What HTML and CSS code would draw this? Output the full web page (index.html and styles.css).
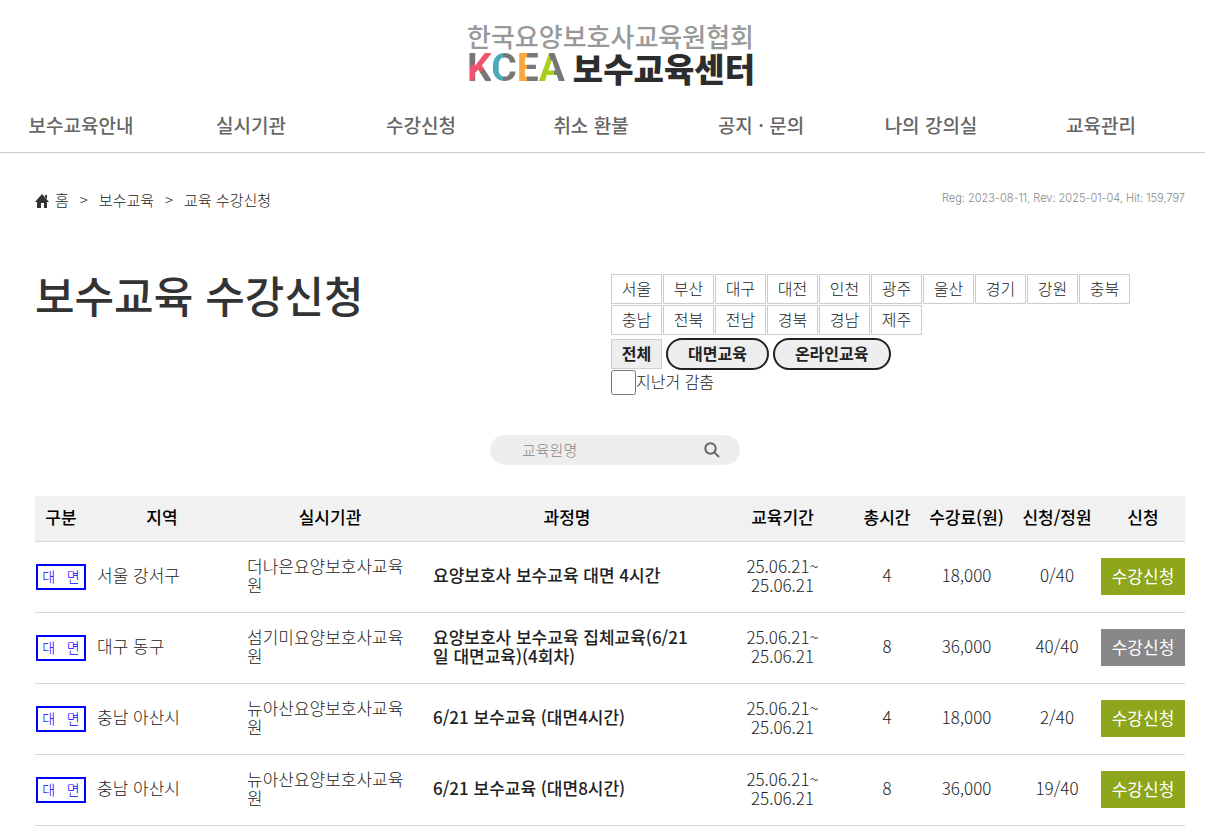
FILE: index.html
```
<!DOCTYPE html>
<html lang="ko">
<head>
  <meta charset="UTF-8">
  <meta name="viewport" content="width=device-width, initial-scale=1">
  <title>보수교육 수강신청</title>
  <link rel="stylesheet" href="styles.css">
</head>
<body>
  <header class="header">
    <div class="logo-wrap">
      <a href="#" class="logo">
        <span class="logo-top">한국요양보호사교육원협회</span>
        <span class="logo-bottom">
          <span class="kcea"><span class="k">K</span><span class="c">C</span><span class="e">E</span><span class="a">A</span></span>
          <strong class="logo-name">보수교육센터</strong>
        </span>
      </a>
    </div>
    <nav class="nav">
      <a href="#">보수교육안내</a>
      <a href="#">실시기관</a>
      <a href="#">수강신청</a>
      <a href="#">취소 환불</a>
      <a href="#">공지 · 문의</a>
      <a href="#">나의 강의실</a>
      <a href="#">교육관리</a>
    </nav>
  </header>

  <main class="content">
    <div class="location">
      <div class="breadcrumb">
        <a href="#"><svg class="home" viewBox="0 0 14 14"><path d="M7 0 14 8h-2v6H9V9H6v5H2V8H0z M10 1h2v4l-2-2z"/></svg>홈</a>
        <span>&gt;</span>
        <a href="#">보수교육</a>
        <span>&gt;</span>
        <a href="#">교육 수강신청</a>
      </div>
      <div class="meta">Reg: 2023-08-11, Rev: 2025-01-04, Hit: 159,797</div>
    </div>

    <div class="top">
      <h1>보수교육 수강신청</h1>
      <div class="filter">
        <div class="regions">
          <button type="button">서울</button>
          <button type="button">부산</button>
          <button type="button">대구</button>
          <button type="button">대전</button>
          <button type="button">인천</button>
          <button type="button">광주</button>
          <button type="button">울산</button>
          <button type="button">경기</button>
          <button type="button">강원</button>
          <button type="button">충북</button>
          <button type="button">충남</button>
          <button type="button">전북</button>
          <button type="button">전남</button>
          <button type="button">경북</button>
          <button type="button">경남</button>
          <button type="button">제주</button>
        </div>
        <div class="types">
          <button type="button" class="all">전체</button>
          <button type="button" class="round">대면교육</button>
          <button type="button" class="round">온라인교육</button>
        </div>
        <div class="hide-past">
          <input type="checkbox" id="past"><label for="past">지난거 감춤</label>
        </div>
      </div>
    </div>

    <div class="search-wrap">
      <form class="search">
        <input type="text" placeholder="교육원명" aria-label="교육원명">
        <button type="button" aria-label="검색">
          <svg viewBox="0 0 16 16"><circle cx="6.5" cy="6.5" r="5.2"/><path d="M10.4 10.4 15 15"/></svg>
        </button>
      </form>
    </div>

    <table class="list">
      <colgroup>
        <col class="w-type"><col class="w-area"><col class="w-org"><col><col class="w-date">
        <col class="w-hour"><col class="w-fee"><col class="w-seat"><col class="w-apply">
      </colgroup>
      <thead>
        <tr>
          <th>구분</th><th>지역</th><th>실시기관</th><th>과정명</th><th>교육기간</th>
          <th>총시간</th><th>수강료(원)</th><th>신청/정원</th><th>신청</th>
        </tr>
      </thead>
      <tbody>
        <tr>
          <td class="type"><span class="badge">대&nbsp;&nbsp; 면</span></td>
          <td class="left">서울 강서구</td>
          <td class="left">더나은요양보호사교육원</td>
          <td class="left name">요양보호사 보수교육 대면 4시간</td>
          <td>25.06.21~<br>25.06.21</td>
          <td>4</td><td>18,000</td><td>0/40</td>
          <td class="apply"><button type="button">수강신청</button></td>
        </tr>
        <tr>
          <td class="type"><span class="badge">대&nbsp;&nbsp; 면</span></td>
          <td class="left">대구 동구</td>
          <td class="left">섬기미요양보호사교육원</td>
          <td class="left name">요양보호사 보수교육 집체교육(6/21일 대면교육)(4회차)</td>
          <td>25.06.21~<br>25.06.21</td>
          <td>8</td><td>36,000</td><td>40/40</td>
          <td class="apply"><button type="button" class="full">수강신청</button></td>
        </tr>
        <tr>
          <td class="type"><span class="badge">대&nbsp;&nbsp; 면</span></td>
          <td class="left">충남 아산시</td>
          <td class="left">뉴아산요양보호사교육원</td>
          <td class="left name">6/21 보수교육 (대면4시간)</td>
          <td>25.06.21~<br>25.06.21</td>
          <td>4</td><td>18,000</td><td>2/40</td>
          <td class="apply"><button type="button">수강신청</button></td>
        </tr>
        <tr>
          <td class="type"><span class="badge">대&nbsp;&nbsp; 면</span></td>
          <td class="left">충남 아산시</td>
          <td class="left">뉴아산요양보호사교육원</td>
          <td class="left name">6/21 보수교육 (대면8시간)</td>
          <td>25.06.21~<br>25.06.21</td>
          <td>8</td><td>36,000</td><td>19/40</td>
          <td class="apply"><button type="button">수강신청</button></td>
        </tr>
      </tbody>
    </table>
  </main>
</body>
</html>
```
FILE: styles.css
```
* {
  box-sizing: border-box;
}

body {
  margin: 0;
  font-family: "Noto Sans CJK KR", sans-serif;
  font-weight: 300;
  font-size: 17px;
  line-height: 19px;
  color: #222;
  background-color: #fff;
}

a {
  color: inherit;
  text-decoration: none;
}

button,
input {
  font-family: inherit;
  color: inherit;
}

button {
  cursor: pointer;
}

/* header */
.header {
  padding-top: 22px;
  border-bottom: 1px solid #ccc;
}

.logo-wrap {
  padding-left: 17px;
}

.logo {
  display: block;
  width: 288px;
  margin: 0 auto;
  white-space: nowrap;
}

.logo-top {
  display: block;
  font-size: 26px;
  font-weight: 500;
  line-height: 28px;
  color: #999;
}

.logo-bottom {
  display: flex;
  align-items: center;
  justify-content: space-between;
  height: 36px;
}

.kcea {
  font-family: Roboto, sans-serif;
  font-size: 39px;
  font-weight: 700;
  line-height: 38px;
}

.kcea span {
  color: transparent;
  background-clip: text;
  -webkit-background-clip: text;
}

.kcea .k {
  background-image: linear-gradient(135deg, #777 36%, #f0536f 36%, #f0536f 58%, #777 58%);
}

.kcea .c {
  background-image: linear-gradient(90deg, #4aa9bb 45%, #777 45%);
}

.kcea .e {
  background-image: linear-gradient(90deg, #f9a73e 45%, #777 45%);
}

.kcea .a {
  background-image: linear-gradient(75deg, #a9cf1c 52%, #777 52%);
}

.logo-name {
  font-size: 33px;
  font-weight: 900;
  line-height: 32px;
  color: #2d2d2d;
}

.nav {
  display: grid;
  grid-template-columns: repeat(7, 1fr);
  margin: 12px 19px 0 -4px;
}

.nav a {
  padding: 14px 0;
  font-size: 19px;
  font-weight: 500;
  line-height: 26px;
  text-align: center;
  color: #666;
}

/* content */
.content {
  padding: 37px 20px 0 35px;
}

.location {
  display: flex;
  justify-content: space-between;
}

.breadcrumb {
  display: flex;
  gap: 11px;
  font-size: 15px;
  line-height: 20px;
}

.home {
  width: 14px;
  height: 14px;
  margin-right: 6px;
  vertical-align: -2px;
  fill: #333;
}

.meta {
  font-family: Inter, sans-serif;
  font-size: 11px;
  line-height: 16px;
  color: #888;
}

.top {
  display: grid;
  grid-template-columns: 1fr 1fr;
  column-gap: 2px;
  margin-top: 64px;
}

h1 {
  margin: 0;
  font-size: 43px;
  font-weight: 500;
  line-height: 40px;
  color: #333;
}

.filter {
  padding-right: 40px;
}

.regions,
.types {
  display: flex;
  flex-wrap: wrap;
  gap: 1px;
}

.regions button,
.all {
  width: 51px;
  height: 30px;
  padding: 0 0 2px;
  border: 1px solid #ccc;
  background-color: #fff;
  font-size: 16px;
  font-weight: 300;
}

.types {
  align-items: center;
  gap: 4px;
  margin-top: 3px;
}

.types button {
  background-color: #eee;
  font-size: 16px;
  font-weight: 700;
}

.types .round {
  height: 32px;
  padding: 0 20px 2px;
  border: 2px solid #222;
  border-radius: 16px;
}

.hide-past {
  display: flex;
  font-size: 16px;
  line-height: 22px;
}

.hide-past input {
  width: 25px;
  height: 25px;
  margin: 0;
}

/* search */
.search-wrap {
  padding: 40px 0 31px 10px;
}

.search {
  display: flex;
  align-items: center;
  width: 250px;
  height: 30px;
  margin: 0 auto;
  padding: 0 20px 0 32px;
  border-radius: 15px;
  background-color: #eee;
}

.search input {
  flex: 1;
  min-width: 0;
  padding: 0 0 2px;
  border: 0;
  outline: 0;
  background: none;
  font-size: 15px;
  font-weight: 300;
}

.search input::placeholder {
  color: #888;
}

.search button {
  display: flex;
  padding: 0;
  border: 0;
  background: none;
}

.search svg {
  width: 16px;
  height: 16px;
  fill: none;
  stroke: #666;
  stroke-width: 2;
}

/* table */
.list {
  width: 100%;
  table-layout: fixed;
  border-collapse: collapse;
}

.w-type { width: 52px; }
.w-area { width: 150px; }
.w-org { width: 186px; }
.w-date { width: 143px; }
.w-hour { width: 66px; }
.w-fee { width: 93px; }
.w-seat { width: 88px; }
.w-apply { width: 84px; }

.list th {
  height: 45px;
  padding: 0 0 3px;
  background-color: #f1f1f1;
  border-bottom: 1px solid #d5d5d5;
  font-weight: 500;
  color: #000;
}

.list td {
  height: 71px;
  padding: 0 0 4px;
  border-bottom: 1px solid #d5d5d5;
  text-align: center;
}

.list .left {
  padding: 0 10px 4px;
  text-align: left;
}

.list .name {
  font-weight: 500;
}

.list .type,
.list .apply {
  padding-bottom: 0;
}

.badge {
  display: block;
  width: 50px;
  margin-left: 1px;
  padding-bottom: 2px;
  border: 2px solid #00f;
  font-size: 14px;
  line-height: 20px;
  text-align: center;
  color: #00f;
}

.apply button {
  display: block;
  width: 100%;
  height: 37px;
  padding: 0 0 3px;
  border: 0;
  background-color: #8da61b;
  font-size: 17px;
  font-weight: 400;
  color: #fff;
}

.apply .full {
  background-color: #888;
}
```
